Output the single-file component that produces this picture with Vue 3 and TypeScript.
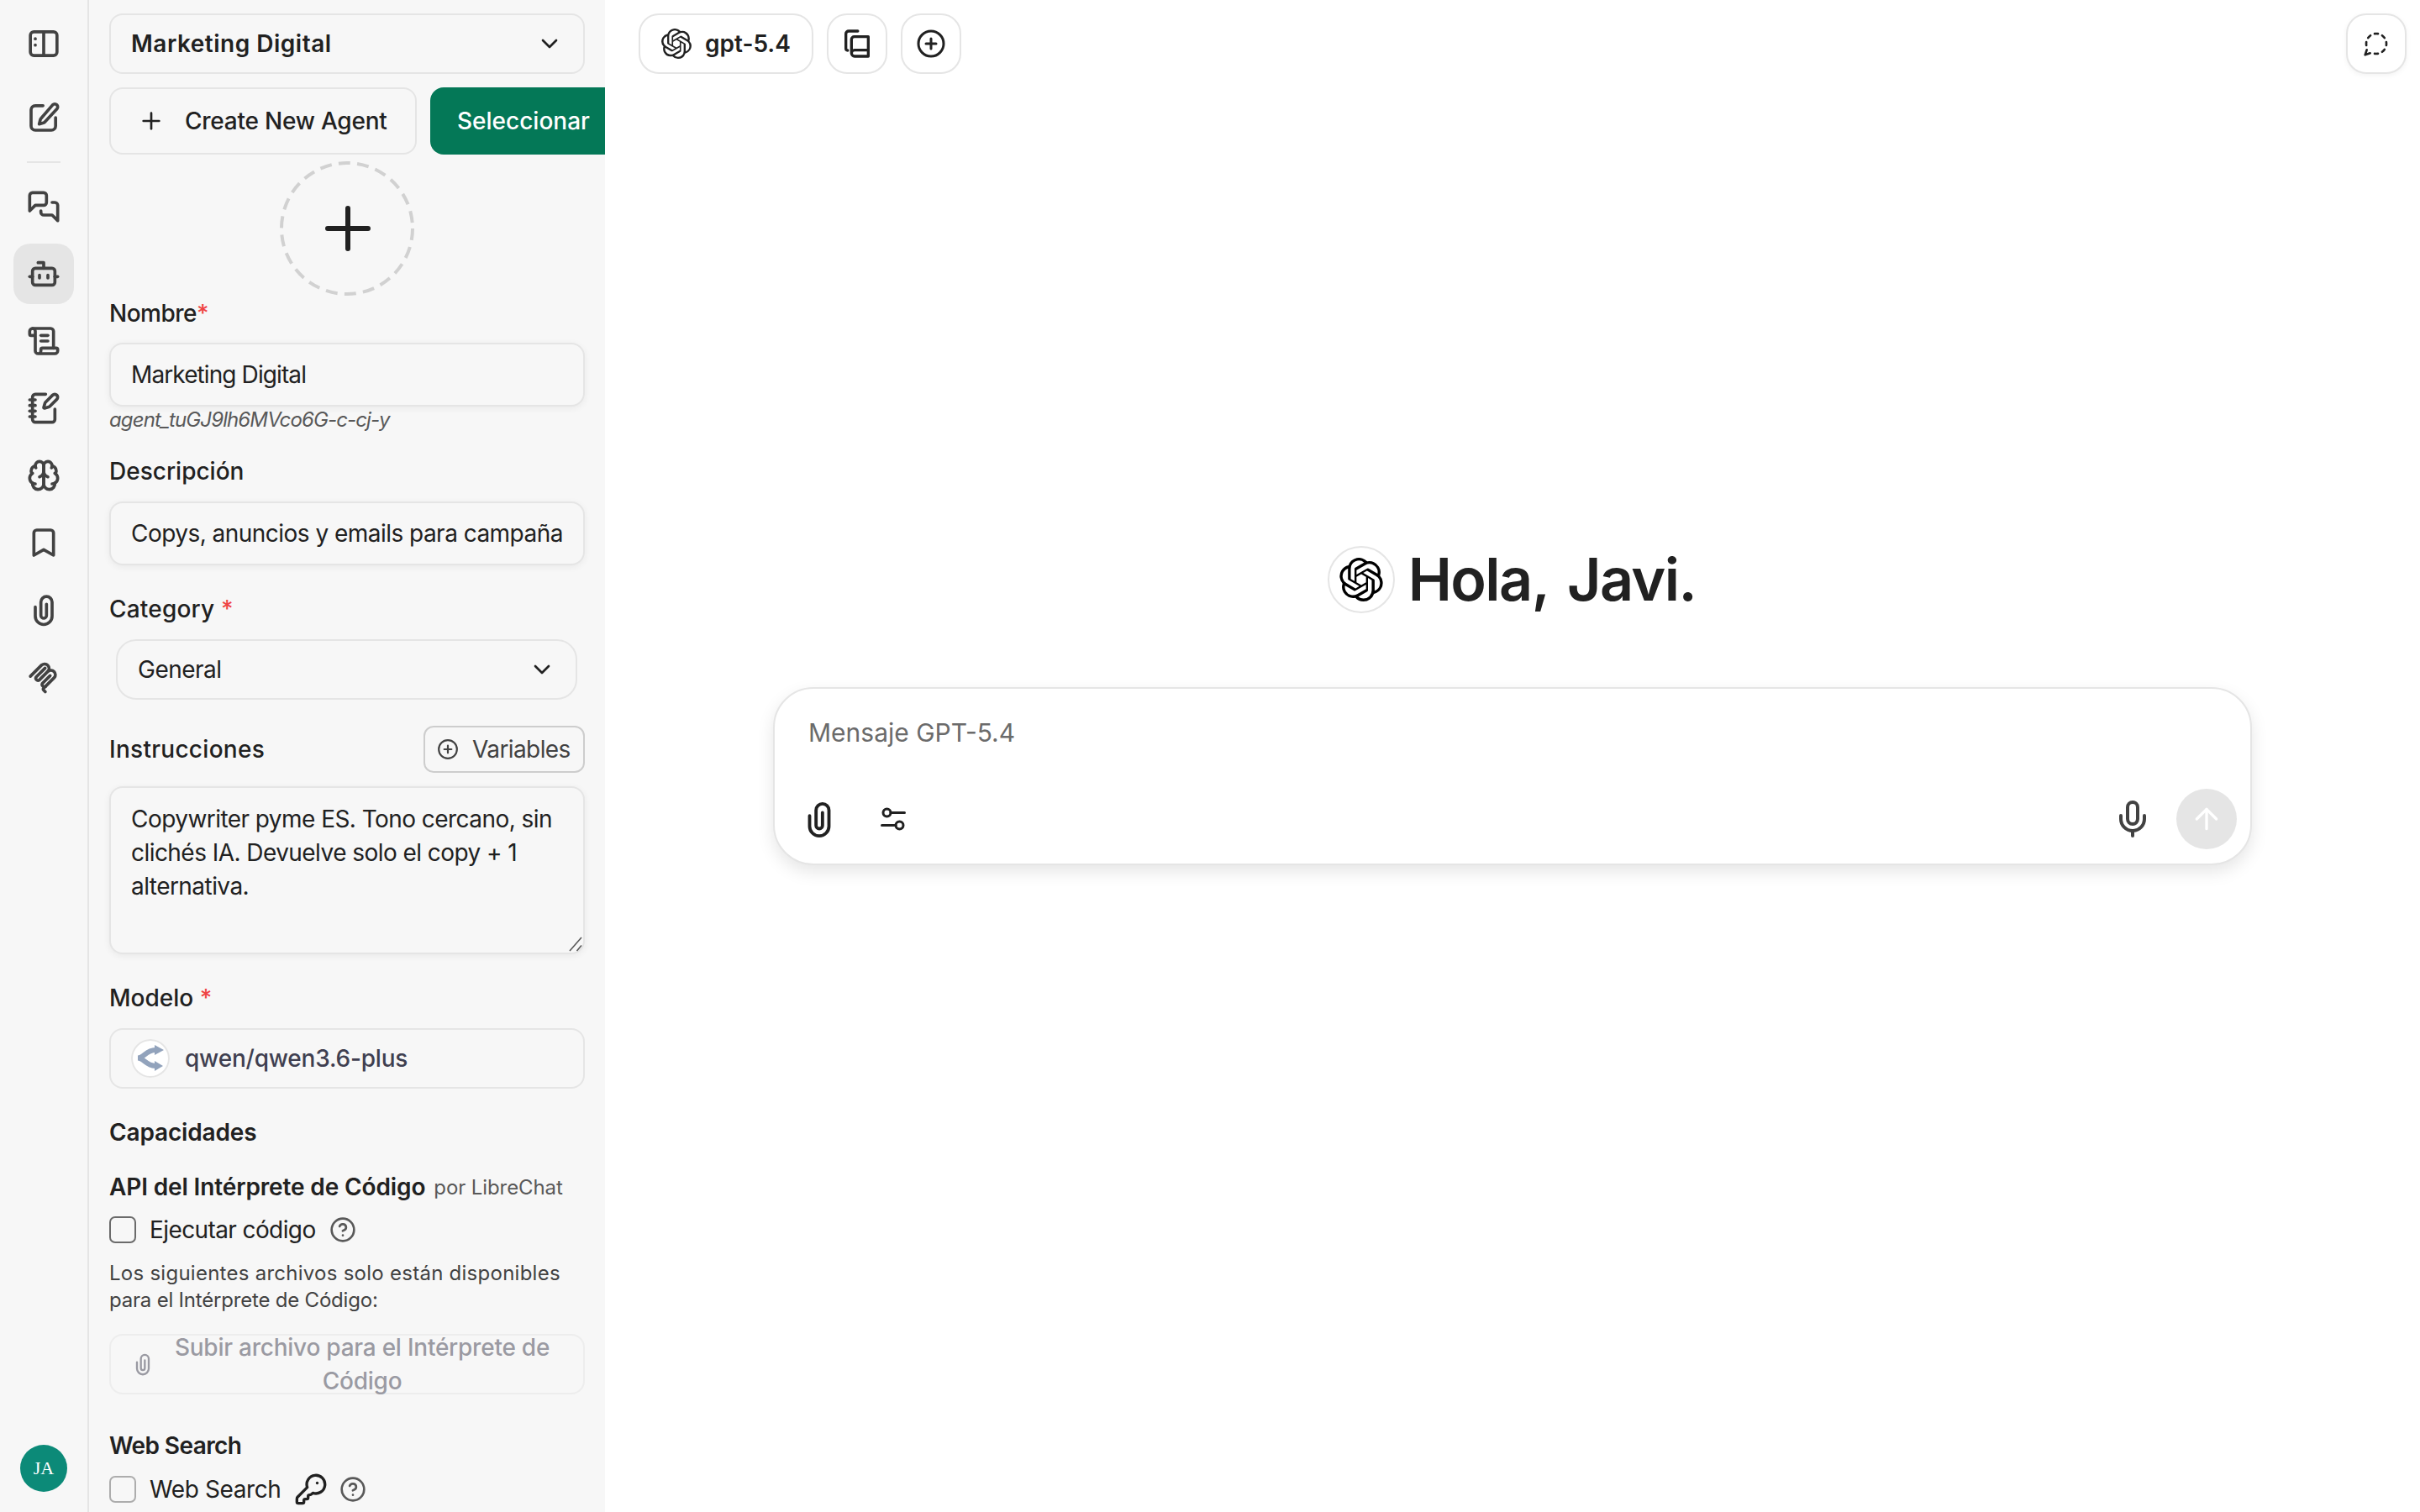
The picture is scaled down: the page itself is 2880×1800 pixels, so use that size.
<script setup lang="ts">
import { h } from 'vue'

const paths: Record<string, string[]> = {
  sidebar: ['M5 3.5h14a2.5 2.5 0 0 1 2.5 2.5v12a2.5 2.5 0 0 1-2.5 2.5H5A2.5 2.5 0 0 1 2.5 18V6A2.5 2.5 0 0 1 5 3.5z', 'M12 3.5v17', 'M6 8.5h.01', 'M6 13h.01'],
  edit: ['M11.5 3.5H6a3 3 0 0 0-3 3V18a3 3 0 0 0 3 3h11.5a3 3 0 0 0 3-3v-6', 'M18.4 2.9a2.1 2.1 0 0 1 3 3l-8.6 9.3a2 2 0 0 1-1 .6l-3 .8.8-3.1a2 2 0 0 1 .5-.9z'],
  chats: ['M14 9a2 2 0 0 1-2 2H6l-4 4V4a2 2 0 0 1 2-2h8a2 2 0 0 1 2 2z', 'M18 9h2a2 2 0 0 1 2 2v11l-4-4h-6a2 2 0 0 1-2-2v-1'],
  bot: ['M12 8V4H8', 'M6 8h12a2 2 0 0 1 2 2v8a2 2 0 0 1-2 2H6a2 2 0 0 1-2-2v-8a2 2 0 0 1 2-2z', 'M2 14h2', 'M20 14h2', 'M15 13v2', 'M9 13v2'],
  scroll: ['M15 12h-5', 'M15 8h-5', 'M19 17V5a2 2 0 0 0-2-2H4', 'M8 21h12a2 2 0 0 0 2-2v-1a1 1 0 0 0-1-1H11a1 1 0 0 0-1 1v1a2 2 0 1 1-4 0V5a2 2 0 1 0-4 0v2a1 1 0 0 0 1 1h3'],
  notebook: ['M13.4 2H6a2 2 0 0 0-2 2v16a2 2 0 0 0 2 2h12a2 2 0 0 0 2-2v-7.4', 'M2 6h4', 'M2 10h4', 'M2 14h4', 'M2 18h4', 'M21.378 5.626a1 1 0 1 0-3.004-3.004l-5.01 5.012a2 2 0 0 0-.506.854l-.837 2.87a.5.5 0 0 0 .62.62l2.87-.837a2 2 0 0 0 .854-.506z'],
  brain: ['M12 5a3 3 0 1 0-5.997.125 4 4 0 0 0-2.526 5.77 4 4 0 0 0 .556 6.588A4 4 0 1 0 12 18Z', 'M12 5a3 3 0 1 1 5.997.125 4 4 0 0 1 2.526 5.77 4 4 0 0 1-.556 6.588A4 4 0 1 1 12 18Z', 'M15 13a4.5 4.5 0 0 1-3-4 4.5 4.5 0 0 1-3 4', 'M17.599 6.5a3 3 0 0 0 .399-1.375', 'M6.003 5.125A3 3 0 0 0 6.401 6.5', 'M3.477 10.896a4 4 0 0 1 .585-.396', 'M19.938 10.5a4 4 0 0 1 .585.396', 'M6 18a4 4 0 0 1-1.967-.516', 'M19.967 17.484A4 4 0 0 1 18 18'],
  bookmark: ['m19 21-7-4-7 4V5a2 2 0 0 1 2-2h10a2 2 0 0 1 2 2v16z'],
  clip: ['M6 10v6.5a6 6 0 0 0 12 0V6.5a4 4 0 0 0-8 0v9.5a2 2 0 0 0 4 0V8'],
  mcp: ['M2.5 11.5 10.6 3.4a3.2 3.2 0 0 1 4.5 4.5L8.8 14.2a1.6 1.6 0 0 1-2.2-2.2l6.4-6.4', 'M15.1 7.9a3.2 3.2 0 0 1 4.5 4.5l-6.3 6.3a1.6 1.6 0 0 1-2.2-2.2l5.5-5.5', 'M13.3 18.7 11.9 20a.9.9 0 0 0 0 1.3l1.2 1.2'],
  chevron: ['m6 9 6 6 6-6'],
  plus: ['M5 12h14', 'M12 5v14'],
  circlePlus: ['M22 12a10 10 0 1 1-20 0 10 10 0 0 1 20 0z', 'M8 12h8', 'M12 8v8'],
  help: ['M22 12a10 10 0 1 1-20 0 10 10 0 0 1 20 0z', 'M9.09 9a3 3 0 0 1 5.83 1c0 2-3 3-3 3', 'M12 17h.01'],
  key: ['M2.586 17.414A2 2 0 0 0 2 18.828V21a1 1 0 0 0 1 1h3a1 1 0 0 0 1-1v-1a1 1 0 0 1 1-1h1a1 1 0 0 0 1-1v-1a1 1 0 0 1 1-1h.172a2 2 0 0 0 1.414-.586l.814-.814a6.5 6.5 0 1 0-4-4z', 'M16.5 7.5h.01'],
  books: ['M12.5 3H6a2 2 0 0 0-2 2v10.5a1.3 1.3 0 0 0 1.3 1.3', 'M8 18.5V9a2 2 0 0 1 2-2h10v14H10.2A2.2 2.2 0 0 1 8 18.8a2.2 2.2 0 0 1 2.2-2.2H20'],
  sliders: ['M4 7a3 3 0 1 0 6 0 3 3 0 0 0-6 0z', 'M10 7h11', 'M14 17a3 3 0 1 0 6 0 3 3 0 0 0-6 0z', 'M3 17h11'],
  mic: ['M12 2a3 3 0 0 0-3 3v7a3 3 0 0 0 6 0V5a3 3 0 0 0-3-3Z', 'M19 10v2a7 7 0 0 1-14 0v-2', 'M12 19v3'],
  arrowUp: ['m5 12 7-7 7 7', 'M12 19V5'],
  tempChat: ['M13.5 3.1c-.5 0-1-.1-1.5-.1s-1 .1-1.5.1', 'M19.3 6.8a10.45 10.45 0 0 0-2.1-2.1', 'M20.9 13.5c.1-.5.1-1 .1-1.5s-.1-1-.1-1.5', 'M17.2 19.3a10.45 10.45 0 0 0 2.1-2.1', 'M10.5 20.9c.5.1 1 .1 1.5.1s1-.1 1.5-.1', 'M3.5 17.5 2 22l4.5-1.5', 'M3.1 10.5c0 .5-.1 1-.1 1.5s.1 1 .1 1.5', 'M6.8 4.7a10.45 10.45 0 0 0-2.1 2.1'],
}

const Icon = (props: { name: string; size?: number }) =>
  h(
    'svg',
    {
      width: props.size ?? 40,
      height: props.size ?? 40,
      viewBox: '0 0 24 24',
      fill: 'none',
      stroke: 'currentColor',
      'stroke-width': 2,
      'stroke-linecap': 'round',
      'stroke-linejoin': 'round',
    },
    paths[props.name].map((d) => h('path', { d })),
  )
Icon.props = ['name', 'size']

const openaiPath =
  'M22.2819 9.8211a5.9847 5.9847 0 0 0-.5157-4.9108 6.0462 6.0462 0 0 0-6.5098-2.9A6.0651 6.0651 0 0 0 4.9807 4.1818a5.9847 5.9847 0 0 0-3.9977 2.9 6.0462 6.0462 0 0 0 .7427 7.0966 5.98 5.98 0 0 0 .511 4.9107 6.051 6.051 0 0 0 6.5146 2.9001A5.9847 5.9847 0 0 0 13.2599 24a6.0557 6.0557 0 0 0 5.7718-4.2058 5.9894 5.9894 0 0 0 3.9977-2.9001 6.0557 6.0557 0 0 0-.7475-7.0729zm-9.022 12.6081a4.4755 4.4755 0 0 1-2.8764-1.0408l.1419-.0804 4.7783-2.7582a.7948.7948 0 0 0 .3927-.6813v-6.7369l2.02 1.1686a.071.071 0 0 1 .038.052v5.5826a4.504 4.504 0 0 1-4.4945 4.4944zm-9.6607-4.1254a4.4708 4.4708 0 0 1-.5346-3.0137l.142.0852 4.783 2.7582a.7712.7712 0 0 0 .7806 0l5.8428-3.3685v2.3324a.0804.0804 0 0 1-.0332.0615L9.74 19.9502a4.4992 4.4992 0 0 1-6.1408-1.6464zM2.3408 7.8956a4.485 4.485 0 0 1 2.3655-1.9728V11.6a.7664.7664 0 0 0 .3879.6765l5.8144 3.3543-2.0201 1.1685a.0757.0757 0 0 1-.071 0l-4.8303-2.7865A4.504 4.504 0 0 1 2.3408 7.872zm16.5963 3.8558L13.1038 8.364 15.1192 7.2a.0757.0757 0 0 1 .071 0l4.8303 2.7913a4.4944 4.4944 0 0 1-.6765 8.1042v-5.6772a.79.79 0 0 0-.407-.667zm2.0107-3.0231l-.142-.0852-4.7735-2.7818a.7759.7759 0 0 0-.7854 0L9.409 9.2297V6.8974a.0662.0662 0 0 1 .0284-.0615l4.8303-2.7866a4.4992 4.4992 0 0 1 6.6802 4.66zM8.3065 12.863l-2.02-1.1638a.0804.0804 0 0 1-.038-.0567V6.0742a4.4992 4.4992 0 0 1 7.3757-3.4537l-.142.0805L8.704 5.459a.7948.7948 0 0 0-.3927.6813zm1.0976-2.3654l2.602-1.4998 2.6069 1.4998v2.9994l-2.5974 1.4997-2.6067-1.4997Z'

const topIcons = ['sidebar', 'edit']
const navIcons = ['chats', 'bot', 'scroll', 'notebook', 'brain', 'bookmark', 'clip', 'mcp']
const instructions = 'Copywriter pyme ES. Tono cercano, sin clichés IA. Devuelve solo el copy + 1 alternativa.'
</script>

<template>
  <div class="app">
    <nav class="rail">
      <div v-for="name in topIcons" :key="name" class="rail-btn"><Icon :name="name" /></div>
      <div class="rail-sep" />
      <div v-for="name in navIcons" :key="name" class="rail-btn" :class="{ active: name === 'bot' }">
        <Icon :name="name" />
      </div>
      <div class="avatar">JA</div>
    </nav>

    <aside class="panel">
      <div class="agent-select">
        <span>Marketing Digital</span>
        <Icon name="chevron" :size="32" />
      </div>
      <div class="actions">
        <button class="btn-new"><Icon name="plus" :size="32" /><span>Create New Agent</span></button>
        <button class="btn-select">Seleccionar</button>
      </div>
      <svg class="avatar-upload" width="160" height="160" viewBox="0 0 160 160" fill="none">
        <circle cx="80" cy="80" r="78" stroke="#d1d1d1" stroke-width="4" stroke-dasharray="14 8.3" />
        <path d="M57 80h48M81 56v48" stroke="#212121" stroke-width="6" stroke-linecap="round" />
      </svg>

      <label class="label first">Nombre<b>*</b></label>
      <input class="input name-input" value="Marketing Digital" readonly />
      <div class="agent-id">agent_tuGJ9lh6MVco6G-c-cj-y</div>

      <label class="label desc">Descripción</label>
      <input class="input desc-input" value="Copys, anuncios y emails para campañas de pymes" readonly />

      <label class="label cat">Category <b>*</b></label>
      <div class="category"><span>General</span><Icon name="chevron" :size="32" /></div>

      <div class="instr-row">
        <label class="label-inline">Instrucciones</label>
        <button class="btn-vars"><Icon name="circlePlus" :size="26" /><span>Variables</span></button>
      </div>
      <div class="textarea-wrap">
        <textarea class="textarea" :value="instructions" readonly />
        <svg class="grip" width="16" height="18" viewBox="0 0 16 18" fill="none" stroke="#595959" stroke-width="1.6">
          <path d="M1 17 15 1M9.5 17 15 10.5" />
        </svg>
      </div>

      <label class="label model">Modelo <b>*</b></label>
      <div class="model-select">
        <span class="model-icon">
          <svg width="46" height="46" viewBox="0 0 46 46">
            <path fill="none" stroke="#92a3bc" stroke-width="6" d="M8 22.5C15 22.5 18 13 29 13M8 22.5C15 22.5 18 32 29 32" />
            <path fill="#92a3bc" d="M28 7l11 6-11 6zM28 26l10 6-10 6z" />
          </svg>
        </span>
        <span>qwen/qwen3.6-plus</span>
      </div>

      <label class="label caps">Capacidades</label>
      <div class="api-title"><strong>API del Intérprete de Código</strong><span>por LibreChat</span></div>
      <div class="check-row">
        <span class="box" />
        <span class="check-text">Ejecutar código</span>
        <Icon class="help" name="help" :size="32" />
      </div>
      <p class="note">
        <span class="note-a">Los siguientes archivos solo están disponibles</span>
        <span class="note-b">para el Intérprete de Código:</span>
      </p>
      <div class="upload">
        <Icon name="clip" :size="28" />
        <span>Subir archivo para el Intérprete de Código</span>
      </div>

      <label class="label web">Web Search</label>
      <div class="check-row web-row">
        <span class="box light" />
        <span class="check-text">Web Search</span>
        <Icon class="key" name="key" :size="40" />
        <Icon class="help" name="help" :size="32" />
      </div>
    </aside>

    <main class="main">
      <header class="topbar">
        <div class="pill">
          <svg width="36" height="36" viewBox="0 0 24 24"><path fill="#212121" :d="openaiPath" /></svg>
          <span>gpt-5.4</span>
        </div>
        <div class="square"><Icon name="books" :size="40" /></div>
        <div class="square"><Icon name="circlePlus" :size="36" /></div>
        <div class="square temp"><Icon name="tempChat" :size="32" /></div>
      </header>

      <section class="hero">
        <div class="greet">
          <span class="logo">
            <svg width="52" height="52" viewBox="0 0 24 24"><path fill="#000" :d="openaiPath" /></svg>
          </span>
          <h1>Hola, Javi.</h1>
        </div>
        <div class="composer">
          <div class="placeholder">Mensaje GPT-5.4</div>
          <div class="tools">
            <Icon class="tool-clip" name="clip" :size="46" />
            <Icon class="tool-sliders" name="sliders" :size="36" />
            <Icon class="tool-mic" name="mic" :size="48" />
            <span class="send"><Icon name="arrowUp" :size="40" /></span>
          </div>
        </div>
      </section>
    </main>
  </div>
</template>

<style>
html,
body {
  margin: 0;
  background: #fff;
}
</style>

<style scoped>
* {
  box-sizing: border-box;
}
.app {
  display: flex;
  width: 2880px;
  height: 1800px;
  overflow: hidden;
  font-family: Inter, 'Noto Sans', sans-serif;
  font-size: 28px;
  color: #212121;
  background: #fff;
}

.rail {
  flex: none;
  width: 106px;
  height: 100%;
  padding: 16px 16px 24px;
  display: flex;
  flex-direction: column;
  gap: 8px;
  background: #f7f7f7;
  border-right: 2px solid #e5e5e5;
}
.rail-btn {
  flex: none;
  width: 72px;
  height: 72px;
  display: flex;
  align-items: center;
  justify-content: center;
  border-radius: 20px;
  color: #424242;
}
.rail-btn svg {
  stroke-width: 2.2;
}
.rail-btn:nth-child(2) {
  margin-top: 8px;
}
.rail-btn.active {
  background: #e5e5e5;
}
.rail-sep {
  flex: none;
  width: 40px;
  height: 2px;
  margin: 8px 0 8px 16px;
  background: #e5e5e5;
}
.avatar {
  margin: auto 0 0 8px;
  width: 56px;
  height: 56px;
  border-radius: 50%;
  background: #0c8a78;
  color: #fff;
  font-family: 'Liberation Serif', serif;
  font-size: 22px;
  display: flex;
  align-items: center;
  justify-content: center;
}

.panel {
  flex: none;
  width: 614px;
  height: 100%;
  padding: 16px 24px 0;
  background: #f7f7f7;
  overflow: hidden;
  display: flex;
  flex-direction: column;
}
.agent-select {
  flex: none;
  height: 72px;
  padding: 0 24px;
  display: flex;
  align-items: center;
  justify-content: space-between;
  border: 2px solid #e5e5e5;
  border-radius: 16px;
  font-weight: 600;
  letter-spacing: 0.5px;
}
.actions {
  flex: none;
  display: flex;
  gap: 16px;
  margin-top: 16px;
  width: 700px;
}
.actions button {
  height: 80px;
  font: inherit;
  font-weight: 500;
  border-radius: 16px;
  white-space: nowrap;
}
.btn-new {
  width: 366px;
  display: flex;
  align-items: center;
  gap: 24px;
  padding: 0 0 0 32px;
  background: transparent;
  border: 2px solid #e5e5e5;
  color: #212121;
}
.btn-new span {
  letter-spacing: -0.23px;
}
.btn-select {
  padding: 0 32px;
  background: #047857;
  border: none;
  color: #fff;
}
.avatar-upload {
  flex: none;
  margin: 8px auto 0;
}
.label {
  flex: none;
  height: 40px;
  line-height: 40px;
  font-weight: 500;
  margin-bottom: 16px;
}
.label b {
  color: #ef4444;
  font-weight: 500;
}
.label.first {
  margin-top: 1px;
  margin-bottom: 15px;
  letter-spacing: -0.5px;
}
.label.desc {
  margin-top: 25px;
}
.label.cat {
  margin-top: 32px;
  letter-spacing: 0.2px;
}
.label.model {
  margin-top: 32px;
}
.label.caps {
  margin: 32px 0 25px;
  font-weight: 600;
  letter-spacing: -0.15px;
}
.label.web {
  margin: 41px 0 16px;
  font-weight: 600;
  letter-spacing: -0.6px;
}
.input {
  flex: none;
  width: 100%;
  height: 76px;
  padding: 0 24px;
  border: 2px solid #e5e5e5;
  border-radius: 16px;
  background: #f7f7f7;
  box-shadow: 0 2px 8px rgba(0, 0, 0, 0.06);
  font: inherit;
  color: #212121;
  outline: none;
}
.name-input {
  letter-spacing: -0.9px;
}
.desc-input {
  letter-spacing: -0.53px;
}
.agent-id {
  flex: none;
  height: 32px;
  line-height: 32px;
  font-size: 24px;
  font-style: italic;
  letter-spacing: -0.88px;
  color: #595959;
}
.category {
  flex: none;
  width: 549px;
  height: 72px;
  margin-left: 8px;
  padding: 0 24px;
  display: flex;
  align-items: center;
  justify-content: space-between;
  border: 2px solid #e5e5e5;
  border-radius: 24px;
}
.category span {
  letter-spacing: -0.5px;
}
.instr-row {
  flex: none;
  height: 56px;
  margin-top: 31px;
  margin-bottom: 16px;
  display: flex;
  align-items: center;
  justify-content: space-between;
}
.label-inline {
  font-weight: 500;
  letter-spacing: 0.28px;
}
.btn-vars {
  height: 56px;
  width: 192px;
  padding: 0 0 0 14px;
  display: flex;
  align-items: center;
  gap: 16px;
  background: transparent;
  border: 2px solid #cdcdcd;
  border-radius: 12px;
  font: inherit;
  color: #424242;
  white-space: nowrap;
}
.btn-vars span {
  letter-spacing: -0.6px;
}
.textarea-wrap {
  position: relative;
  flex: none;
  height: 200px;
}
.textarea {
  display: block;
  width: 100%;
  height: 100%;
  padding: 17px 24px;
  border: 2px solid #e5e5e5;
  border-radius: 16px;
  background: #f7f7f7;
  box-shadow: 0 2px 8px rgba(0, 0, 0, 0.06);
  font: inherit;
  line-height: 40px;
  letter-spacing: -0.55px;
  color: #212121;
  outline: none;
  resize: none;
}
.grip {
  position: absolute;
  right: 3px;
  bottom: 3px;
}
.model-select {
  flex: none;
  height: 72px;
  padding: 0 24px;
  display: flex;
  align-items: center;
  gap: 18px;
  border: 2px solid #e5e5e5;
  border-radius: 16px;
  font-weight: 500;
  letter-spacing: -0.2px;
  color: #3f3f50;
}
.model-icon {
  width: 46px;
  height: 46px;
  border-radius: 50%;
  background: #fff;
  box-shadow: 0 0 0 2px #e5e5e5 inset;
  display: flex;
}
.api-title {
  flex: none;
  height: 40px;
  display: flex;
  align-items: center;
  gap: 10px;
}
.api-title strong {
  font-weight: 600;
  letter-spacing: -0.13px;
}
.api-title span {
  font-size: 24px;
  letter-spacing: -0.1px;
  color: #595959;
}
.check-row {
  flex: none;
  height: 32px;
  margin-top: 15px;
  display: flex;
  align-items: center;
}
.check-text {
  margin-left: 16px;
  letter-spacing: -0.6px;
}
.box {
  width: 32px;
  height: 32px;
  border: 2px solid #6b6b6b;
  border-radius: 7px;
}
.box.light {
  border-color: #adadad;
}
.help {
  flex: none;
  margin-left: 16px;
  color: #595959;
}
.note {
  flex: none;
  margin: 20px 0 24px;
  font-size: 24px;
  line-height: 32px;
  color: #424242;
}
.note span {
  display: block;
  white-space: nowrap;
}
.note-a {
  letter-spacing: 0.26px;
}
.note-b {
  letter-spacing: -0.2px;
}
.upload {
  flex: none;
  height: 72px;
  padding: 0 28px 0 24px;
  display: flex;
  align-items: center;
  gap: 12px;
  border: 2px solid #e5e5e5;
  border-radius: 16px;
  opacity: 0.5;
  font-weight: 500;
  line-height: 40px;
  letter-spacing: -0.24px;
  color: #3f3f50;
  text-align: center;
}
.upload svg {
  flex: none;
}
.web-row {
  margin-top: 0;
}
.web-row .check-text {
  letter-spacing: -0.4px;
}
.key {
  flex: none;
  margin-left: 16px;
}
.web-row .help {
  margin-left: 14px;
}

.main {
  flex: 1;
  min-width: 0;
  display: flex;
  flex-direction: column;
}
.topbar {
  flex: none;
  height: 104px;
  padding: 16px 16px 16px 40px;
  display: flex;
  gap: 16px;
}
.pill,
.square {
  height: 72px;
  border: 2px solid #e5e5e5;
  border-radius: 24px;
  display: flex;
  align-items: center;
  background: #fff;
}
.pill {
  width: 208px;
  padding-left: 25px;
  gap: 16px;
  font-weight: 600;
}
.square {
  width: 72px;
  justify-content: center;
}
.square.temp {
  margin-left: auto;
  box-shadow: 0 2px 6px rgba(0, 0, 0, 0.05);
}
.hero {
  flex: 1;
  padding-top: 546px;
  display: flex;
  flex-direction: column;
  align-items: center;
}
.greet {
  height: 80px;
  padding-right: 2px;
  display: flex;
  align-items: center;
  gap: 16px;
  margin-bottom: 88px;
}
.logo {
  width: 80px;
  height: 80px;
  border-radius: 50%;
  border: 2px solid #e5e5e5;
  display: flex;
  align-items: center;
  justify-content: center;
}
.greet h1 {
  margin: 0;
  font-size: 70px;
  line-height: 80px;
  font-weight: 600;
  letter-spacing: -1.6px;
  word-spacing: 7px;
  white-space: pre;
}
.composer {
  width: 1760px;
  height: 212px;
  padding: 36px 16px 0 40px;
  border: 2px solid #e5e5e5;
  border-radius: 48px;
  box-shadow: 0 8px 20px rgba(0, 0, 0, 0.1);
  background: #fff;
}
.placeholder {
  height: 40px;
  line-height: 32px;
  font-size: 30px;
  color: #6b6b6b;
}
.tools {
  margin-top: 43px;
  height: 72px;
  display: flex;
  align-items: center;
  color: #212121;
}
.tool-clip {
  margin-left: -10px;
}
.tool-sliders {
  margin-left: 47px;
}
.tool-mic {
  margin-left: auto;
  color: #424242;
}
.send {
  margin-left: 28px;
  width: 72px;
  height: 72px;
  border-radius: 50%;
  background: #e5e5e5;
  color: #fff;
  display: flex;
  align-items: center;
  justify-content: center;
}
</style>
